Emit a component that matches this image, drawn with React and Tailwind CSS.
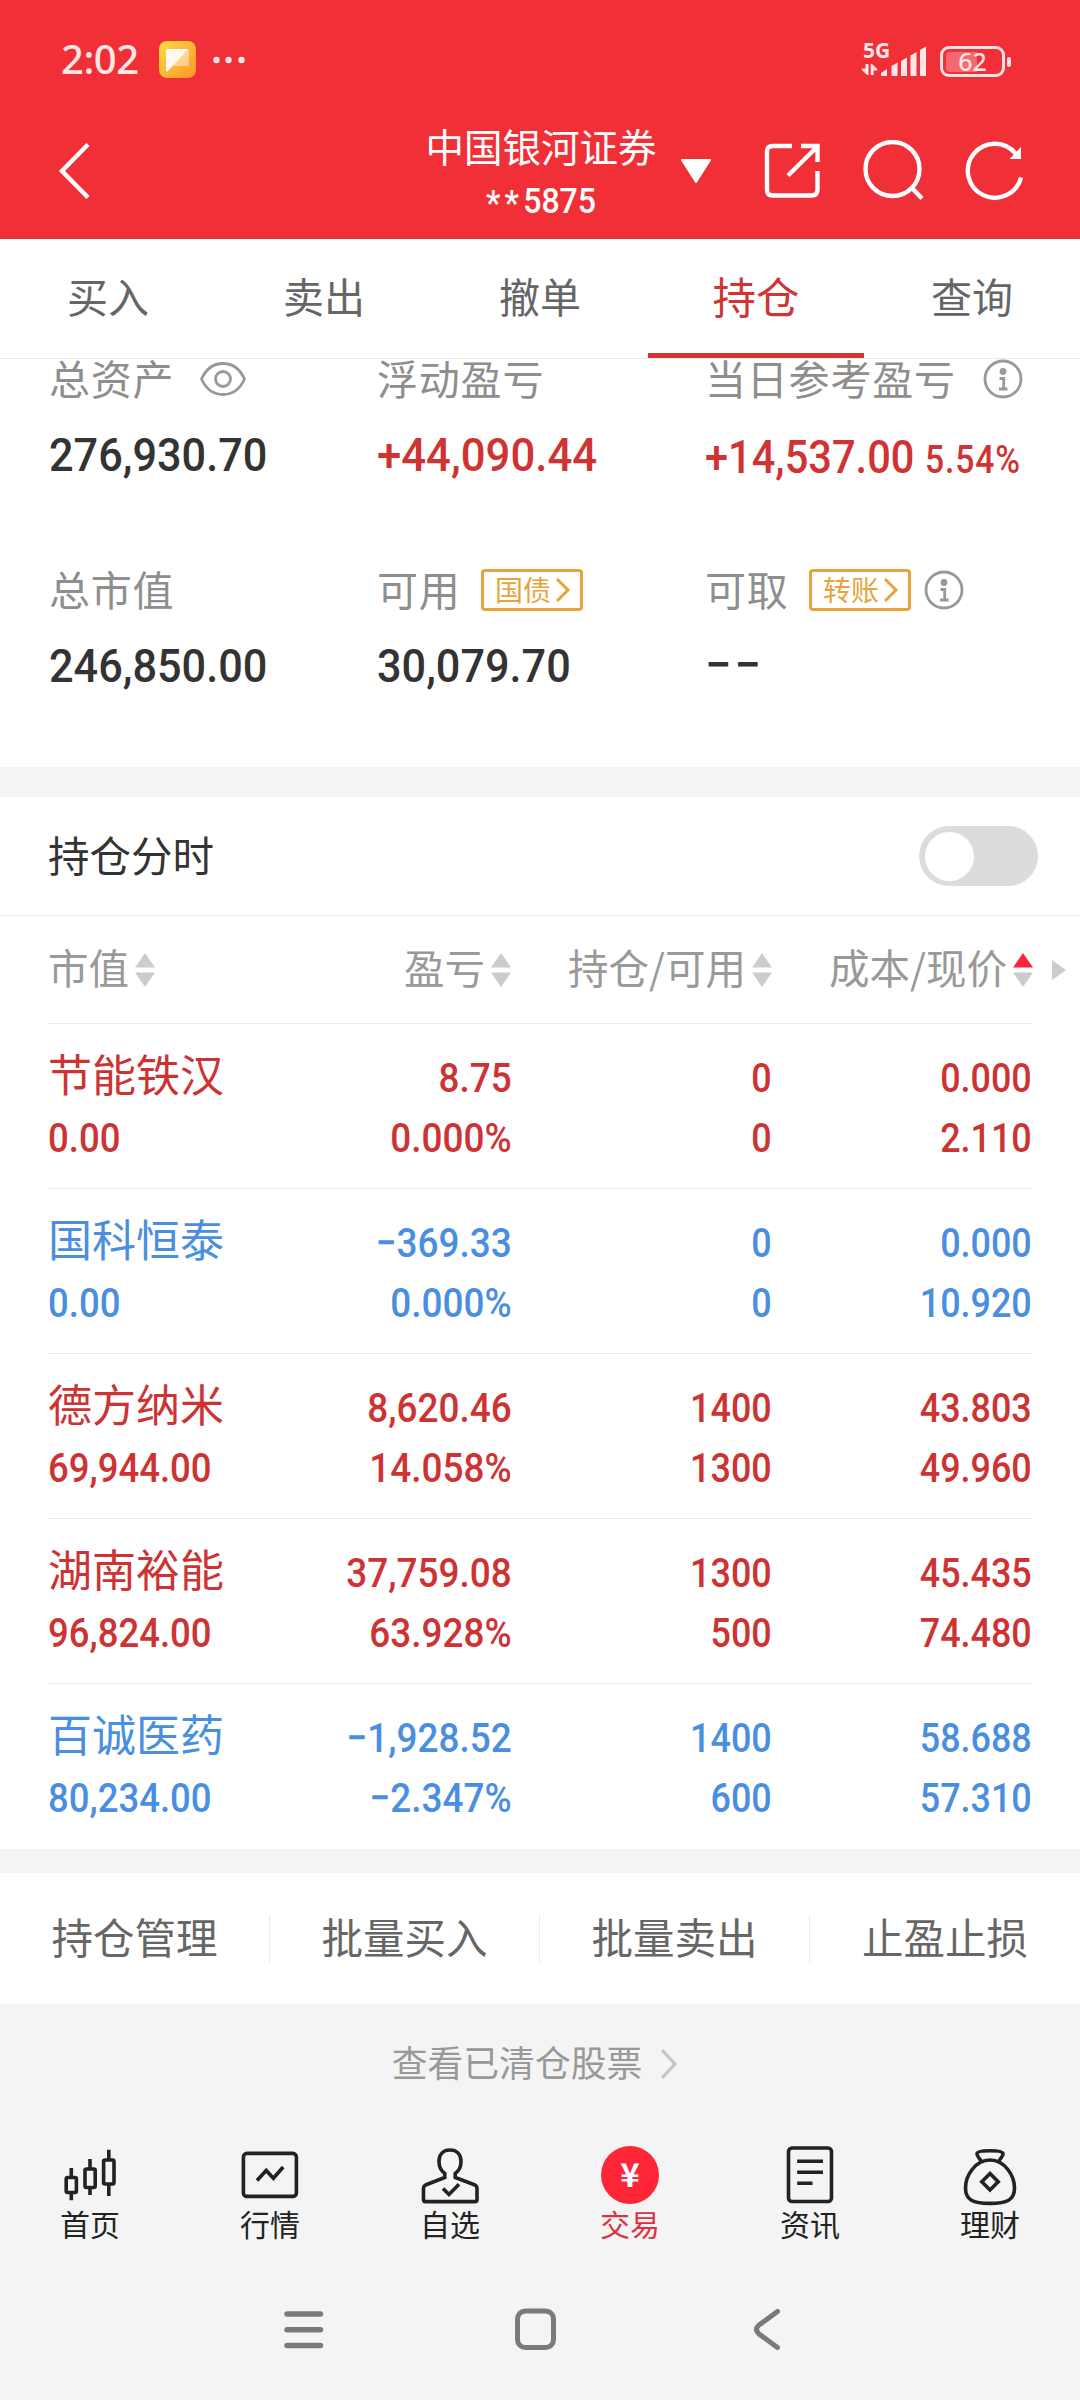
import React, { useState } from "react";

const tabs = ["买入", "卖出", "撤单", "持仓", "查询"];

const headers = [
  { label: "市值", col: "w-[180px] justify-start" },
  { label: "盈亏", col: "w-[283px] justify-end" },
  { label: "持仓/可用", col: "w-[261px] justify-end" },
  { label: "成本/现价", col: "w-[261px] justify-end", active: true },
];

const stocks = [
  { name: "节能铁汉", value: "0.00", profit: "8.75", rate: "0.000%", hold: "0", usable: "0", cost: "0.000", price: "2.110", up: true },
  { name: "国科恒泰", value: "0.00", profit: "−369.33", rate: "0.000%", hold: "0", usable: "0", cost: "0.000", price: "10.920", up: false },
  { name: "德方纳米", value: "69,944.00", profit: "8,620.46", rate: "14.058%", hold: "1400", usable: "1300", cost: "43.803", price: "49.960", up: true },
  { name: "湖南裕能", value: "96,824.00", profit: "37,759.08", rate: "63.928%", hold: "1300", usable: "500", cost: "45.435", price: "74.480", up: true },
  { name: "百诚医药", value: "80,234.00", profit: "−1,928.52", rate: "−2.347%", hold: "1400", usable: "600", cost: "58.688", price: "57.310", up: false },
];

const actions = ["持仓管理", "批量买入", "批量卖出", "止盈止损"];

const InfoIcon = () => (
  <svg width="40" height="40" viewBox="0 0 40 40" fill="none" stroke="#999" strokeWidth="2.8">
    <circle cx="20" cy="20" r="18" />
    <circle cx="20" cy="12.5" r="3.4" fill="#999" stroke="none" />
    <path d="M16.5 19.5h4.2v10.5M16 30h8.5" />
  </svg>
);

const EyeIcon = () => (
  <svg width="46" height="36" viewBox="0 0 46 36" fill="none" stroke="#999" strokeWidth="2.8">
    <path d="M1.5 18C6 8 13 2.5 23 2.5S40 8 44.5 18C40 28 33 33.5 23 33.5S6 28 1.5 18Z" />
    <circle cx="23" cy="18" r="7.5" />
  </svg>
);

const Sort = ({ active }) => (
  <svg width="20" height="34" viewBox="0 0 20 34" fill="#ccc">
    <path d="M10 0l10 14.5H0z" fill={active ? "#fd2638" : "#ccc"} />
    <path d="M10 34l10-14.5H0z" />
  </svg>
);

const Label = ({ children, className = "" }) => (
  <span className={"-mt-[4px] tracking-[0.8px] " + className}>{children}</span>
);

const Tag = ({ children }) => (
  <span className="flex items-center w-[102px] h-[42px] border-[3px] border-[#e8a43c] rounded-[4px] pl-[11px] text-[28px] leading-none text-[#e8a43c]">
    <span className="-mt-[2px]">{children}</span>
    <svg className="ml-[4px]" width="16" height="26" viewBox="0 0 16 26" fill="none" stroke="#e8a43c" strokeWidth="3">
      <path d="M2 2l11 11L2 24" />
    </svg>
  </span>
);

// big figures of the account summary
const Figure = ({ children, className = "text-[#333] scale-x-[0.92]" }) => (
  <p className={"origin-left whitespace-nowrap font-['Roboto',sans-serif] font-medium text-[47px] leading-[50px] " + className}>
    {children}
  </p>
);

const Cell = ({ a, b, col }) => (
  <div className={"origin-right text-right font-['Roboto',sans-serif] font-medium text-[41.5px] leading-[60px] pt-[24px] whitespace-nowrap " + col}>
    <p>{a}</p>
    <p>{b}</p>
  </div>
);

const NavIcon = ({ children }) => (
  <svg width="60" height="62" viewBox="0 0 60 62" fill="none" stroke="#222" strokeWidth="3.6">
    {children}
  </svg>
);

const nav = [
  {
    label: "首页",
    icon: (
      <NavIcon>
        <rect x="6.2" y="32.5" width="10.2" height="15" rx="1.5" />
        <rect x="25" y="24" width="10.2" height="18.5" rx="1.5" />
        <rect x="43.6" y="15" width="10.4" height="24" rx="1.5" />
        <path d="M11.3 23v9M11.3 48v7.3M30 14v9.5M30 43v7M48.8 4.7v10M48.8 39.5v11.5" />
      </NavIcon>
    ),
  },
  {
    label: "行情",
    icon: (
      <NavIcon>
        <rect x="3.4" y="8.4" width="53" height="43" rx="3.5" />
        <path d="M17 35.5l9.2-10 7.2 7.8L43.2 22" />
      </NavIcon>
    ),
  },
  {
    label: "自选",
    icon: (
      <NavIcon>
        <path d="M24.8 32.5V28.5C20.5 25.5 19 22 19 16.5C19 9 23.5 5 30 5S41 9 41 16.5C41 22 39.5 25.5 35.2 28.5V32.5L55 40Q57 41 57 43.5V54.5Q57 56.6 55 56.6H5.5Q3.5 56.6 3.5 54.5V43.5Q3.5 41 5.5 40Z" />
        <path d="M23 43.5l6 6L39 39.3" />
      </NavIcon>
    ),
  },
  {
    label: "交易",
    active: true,
    icon: (
      <div className="h-[62px]">
        <span className="mt-px flex items-center justify-center w-[58px] h-[58px] pb-[4px] rounded-full bg-[#fe2537] text-white font-bold text-[33px] leading-none">
          ¥
        </span>
      </div>
    ),
  },
  {
    label: "资讯",
    icon: (
      <NavIcon>
        <rect x="8.5" y="3" width="43" height="53.5" rx="3.5" />
        <path d="M17.2 16.3H43M17.2 27.3H43M17.2 38.3H32.5" />
      </NavIcon>
    ),
  },
  {
    label: "理财",
    icon: (
      <NavIcon>
        <path d="M21.5 17C20.5 13.5 17 12 17 9C17 6.5 22 5.8 30 5.8S43 6.5 43 9C43 12 39.5 13.5 38.5 17" />
        <path d="M30 15C15 15 5.5 31 5.5 43C5.5 55 13 58.4 30 58.4S54.5 55 54.5 43C54.5 31 45 15 30 15Z" />
        <path d="M30 28.5l8.2 8.2L30 45l-8.2-8.3z" />
      </NavIcon>
    ),
  },
];

const App = () => {
  const [tab, setTab] = useState("持仓");
  const [chart, setChart] = useState(false);

  return (
    <div className="w-[1080px] h-[2400px] overflow-hidden bg-[#f4f4f4] font-['Noto_Sans_CJK_SC',sans-serif] text-[#333]">
      <div className="h-[239px] bg-[#f12f37] text-white">
        <div className="flex items-center h-[120px] pl-[61px] pr-[69px]">
          <span className="-mt-[3px] w-[98px] font-['Noto_Sans',sans-serif] font-medium text-[40px] leading-none tracking-[-0.5px] text-[#ffe6e7]">2:02</span>
          <svg width="38" height="38" viewBox="0 0 38 38">
            <defs>
              <linearGradient id="note" x1="0" y1="0" x2="1" y2="1">
                <stop offset="0" stopColor="#fcdc45" />
                <stop offset="1" stopColor="#fd9526" />
              </linearGradient>
            </defs>
            <rect width="37" height="37" rx="8" fill="url(#note)" />
            <path d="M9 8h19q2 0 2 2v13q0 2-2 2H14z" fill="#fff" opacity="0.45" />
            <path d="M9 8h20L8.5 30.5Q7 31 7 29V10q0-2 2-2z" fill="#fffaf0" />
          </svg>
          <svg className="ml-[16px]" width="34" height="8" viewBox="0 0 34 8" fill="#ffe6e7">
            <circle cx="3.5" cy="4" r="3.2" />
            <circle cx="15.5" cy="4" r="3.2" />
            <circle cx="28.5" cy="4" r="3.2" />
          </svg>
          <div className="ml-auto -mt-[3px] flex items-end">
            <div className="w-[20px] h-[37px] flex flex-col">
              <span className="pl-[2px] font-['Noto_Sans',sans-serif] font-bold text-[21px] leading-[20px] text-[#ffe6e7]">5G</span>
              <svg className="mt-[4px]" width="17" height="11" viewBox="0 0 17 12" fill="#ffe6e7">
                <path d="M4.2 0h3.2v12H6L0 6.5V5h4.2zM9.8 12h3.2V7H17V5.5L11.2 0H9.8z" />
              </svg>
            </div>
            <svg width="46" height="32" viewBox="0 0 46 32" fill="#ffe6e7">
              <path d="M0 31v-3l6-4v7zM10.5 31V21l6-3.5V31zM20 31V16l6-3.5V31zM29.5 31V10.500l6-3.5V31zM39 31V5l6-3.500V31z" />
            </svg>
            <div className="ml-[13px] flex items-center">
              <div className="relative w-[65px] h-[31px] border-[3px] border-[#ffe0e1] rounded-[9px]">
                <div className="ml-[3px] mt-[3px] w-[31px] h-[20px] rounded-l-[4px] bg-[#f8696f]"></div>
                <span className="absolute inset-0 text-center font-['Noto_Sans',sans-serif] font-medium text-[25px] leading-[25px] text-[#ffe6e7]">62</span>
              </div>
              <span className="ml-[2px] w-[4px] h-[10px] rounded-[2px] bg-[#ffe0e1]"></span>
            </div>
          </div>
        </div>

        <div className="flex items-center h-[119px] pb-[17px]">
          <svg className="ml-[58px]" width="32" height="56" viewBox="0 0 32 56" fill="none" stroke="#fff" strokeWidth="4.4">
            <path d="M30 1.5L4 28l26 26.5" />
          </svg>
          <div className="ml-[331px] w-[240px] mt-[7px] text-center">
            <p className="text-[38.5px] leading-[52px]">中国银河证券</p>
            <p className="pt-[3px] flex justify-center scale-x-[0.93] font-['Roboto',sans-serif] font-medium text-[34.5px] leading-[54px]">
              <span className="pt-[3px] text-[35px] tracking-[4.5px]">**</span>5875
            </p>
          </div>
          <svg className="ml-[20px]" width="30" height="26" viewBox="0 0 30 26" fill="#fff" stroke="#fff" strokeWidth="2" strokeLinejoin="round">
            <path d="M1 2h28L15 24z" />
          </svg>
          <svg className="ml-[52px]" width="60" height="58" viewBox="0 0 60 58" fill="none" stroke="#fff" strokeWidth="4.4">
            <path d="M29 4H9.5Q4 4 4 9.5V47.5Q4 53.5 9.5 53.5H48.5Q54.5 53.5 54.5 47.5V29" />
            <path d="M38 4H54.5V20M54 5L25 33.5" />
          </svg>
          <svg className="ml-[39px]" width="64" height="62" viewBox="0 0 64 62" fill="none" stroke="#fff" strokeWidth="4.4">
            <circle cx="30.5" cy="29" r="27" />
            <path d="M49.5 47.5L60 58.5" />
          </svg>
          <svg className="ml-[39px]" width="62" height="62" viewBox="0 0 62 62" fill="none" stroke="#fff" strokeWidth="4.4">
            <path d="M56 37.5A27 27 0 1 1 51 14" />
            <path d="M56 7v12H44.5z" fill="#fff" stroke="none" />
          </svg>
        </div>
      </div>

      <div className="grid grid-cols-5 h-[120px] bg-white border-b border-[#ebebeb] text-center">
        {tabs.map((t) => (
          <button
            key={t}
            onClick={() => setTab(t)}
            className={
              t === tab
                ? "h-[119px] pb-[1px] border-b-[5px] border-[#d23434] text-[#d23434] text-[43.5px]"
                : "h-[119px] pb-[5px] text-[#666] text-[41px]"
            }
          >
            {t}
          </button>
        ))}
      </div>

      <div className="h-[408px] bg-white">
        <div className="grid grid-cols-[328px_328px_1fr] pl-[49px] text-[41px] leading-[40px] text-[#8e8e8e]">
          <div>
            <div className="flex items-center h-[40px]">
              <Label>总资产</Label>
              <span className="ml-[26px]"><EyeIcon /></span>
            </div>
            <div className="mt-[31px]"><Figure>276,930.70</Figure></div>
          </div>
          <div>
            <div className="flex items-center h-[40px]"><Label>浮动盈亏</Label></div>
            <div className="mt-[31px]"><Figure className="text-[#d03333] scale-x-[0.93]">+44,090.44</Figure></div>
          </div>
          <div>
            <div className="flex items-center h-[40px]">
              <Label>当日参考盈亏</Label>
              <span className="ml-[27px]"><InfoIcon /></span>
            </div>
            <div className="mt-[33px]">
              <Figure className="text-[#d03333] scale-x-[0.885]">
                +14,537.00<span className="ml-[12px] text-[38px] tracking-[1px]">5.54%</span>
              </Figure>
            </div>
          </div>
        </div>
        <div className="mt-[85px] grid grid-cols-[328px_328px_1fr] pl-[49px] text-[41px] leading-[40px] text-[#8e8e8e]">
          <div>
            <div className="flex items-center h-[40px]"><Label>总市值</Label></div>
            <div className="mt-[31px]"><Figure>246,850.00</Figure></div>
          </div>
          <div>
            <div className="flex items-center h-[40px]">
              <Label className="w-[104px]">可用</Label>
              <Tag>国债</Tag>
            </div>
            <div className="mt-[31px]"><Figure>30,079.70</Figure></div>
          </div>
          <div>
            <div className="flex items-center h-[40px]">
              <Label className="w-[104px]">可取</Label>
              <Tag>转账</Tag>
              <span className="ml-[13px]"><InfoIcon /></span>
            </div>
            <div className="mt-[30px]"><Figure className="text-[#333] tracking-[3px]">−−</Figure></div>
          </div>
        </div>
      </div>

      <div className="mt-[30px] flex items-center justify-between h-[119px] bg-white border-b border-[#ebebeb] pl-[48px] pr-[42px]">
        <span className="-mt-[4px] text-[41.5px]">持仓分时</span>
        <button
          onClick={() => setChart(!chart)}
          className={"flex items-center w-[119px] h-[60px] rounded-full px-[6px] " + (chart ? "justify-end bg-[#d23434]" : "bg-[#dcdcdc]")}
        >
          <span className="w-[49px] h-[49px] rounded-full bg-white"></span>
        </button>
      </div>

      <div className="h-[933px] bg-white">
        <div className="flex items-center h-[107px] pl-[48px] text-[40.5px] text-[#999]">
          {headers.map((h) => (
            <div key={h.label} className={"flex items-center " + h.col}>
              <span className="-mt-[4px]">{h.label}</span>
              <span className="ml-[6px]"><Sort active={h.active} /></span>
            </div>
          ))}
          <svg className="ml-[19px]" width="14" height="20" viewBox="0 0 14 20" fill="#ccc">
            <path d="M0 0l14 10L0 20z" />
          </svg>
        </div>
        <div className="mx-[48px]">
          {stocks.map((s) => (
            <div key={s.name} className={"flex h-[165px] border-t border-[#ebebeb] " + (s.up ? "text-[#cd3333]" : "text-[#4a8fdf]")}>
              <div className="w-[200px] pt-[19px]">
                <p className="text-[44px] leading-[60px] whitespace-nowrap">{s.name}</p>
                <p className="origin-left scale-x-[0.88] pt-[5px] font-['Roboto',sans-serif] font-medium text-[41.5px] leading-[60px]">{s.value}</p>
              </div>
              <Cell a={s.profit} b={s.rate} col="w-[264px] scale-x-[0.89]" />
              <Cell a={s.hold} b={s.usable} col="w-[260px] scale-x-[0.865]" />
              <Cell a={s.cost} b={s.price} col="w-[261px] scale-x-[0.865]" />
            </div>
          ))}
        </div>
      </div>

      <div className="mt-[24px] grid grid-cols-4 items-center h-[131px] bg-white text-[41.5px] text-[#666] text-center">
        {actions.map((a, i) => (
          <div key={a} className={"flex items-center justify-center h-[48px] " + (i < 3 ? "border-r border-[#ebebeb]" : "")}>
            <span className="-mt-[4px]">{a}</span>
          </div>
        ))}
      </div>

      <div className="flex items-center justify-center h-[119px] pr-[10px] text-[35.8px] text-[#999]">
        <span className="-mt-[3px]">查看已清仓股票</span>
        <svg className="ml-[18px]" width="18" height="32" viewBox="0 0 18 32" fill="none" stroke="#c4c4c4" strokeWidth="3">
          <path d="M2 2l13 14L2 30" />
        </svg>
      </div>

      <div className="mt-[22px] grid grid-cols-6 h-[115px]">
        {nav.map((n) => (
          <div key={n.label} className={"flex flex-col items-center text-[30px] leading-[32px] " + (n.active ? "text-[#e0303f]" : "text-[#222]")}>
            {n.icon}
            {n.label}
          </div>
        ))}
      </div>

      <div className="mt-[48px] flex items-center pl-[284px]">
        <svg width="40" height="44" viewBox="0 0 40 44" fill="none" stroke="#7a7a7a" strokeWidth="5.5" strokeLinecap="round">
          <path d="M3 6H36.5M3 21.7H36.5M3 37.4H36.5" />
        </svg>
        <svg className="ml-[190px]" width="44" height="44" viewBox="0 0 44 44" fill="none" stroke="#7a7a7a" strokeWidth="5">
          <rect x="3.5" y="3" width="36" height="36.5" rx="8" />
        </svg>
        <svg className="ml-[195px]" width="30" height="44" viewBox="0 0 30 44" fill="none" stroke="#7a7a7a" strokeWidth="5" strokeLinecap="round">
          <path d="M24.5 3.5L5.5 17.5Q1.500 21.5 5.5 25.5L24.5 39.5" />
        </svg>
      </div>
    </div>
  );
};

export default App;
